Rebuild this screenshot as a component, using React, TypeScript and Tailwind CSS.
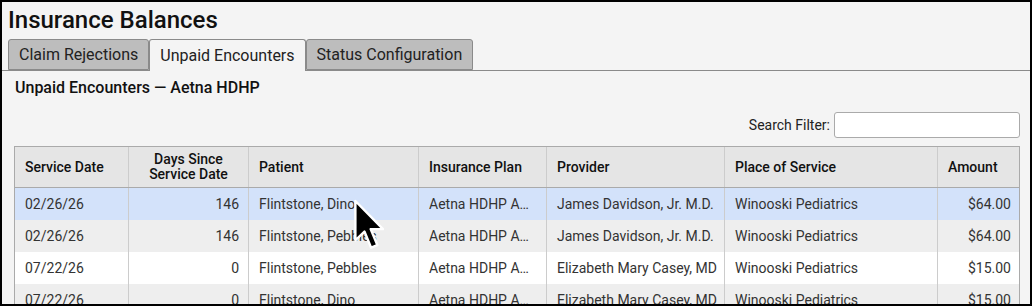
import React from 'react';

type Row = {
  date: string;
  days: number;
  patient: string;
  plan: string;
  provider: string;
  place: string;
  amount: string;
};

const rows: Row[] = [
  { date: '02/26/26', days: 146, patient: 'Flintstone, Dino', plan: 'Aetna HDHP Aetna HDHP', provider: 'James Davidson, Jr. M.D.', place: 'Winooski Pediatrics', amount: '$64.00' },
  { date: '02/26/26', days: 146, patient: 'Flintstone, Pebbles', plan: 'Aetna HDHP Aetna HDHP', provider: 'James Davidson, Jr. M.D.', place: 'Winooski Pediatrics', amount: '$64.00' },
  { date: '07/22/26', days: 0, patient: 'Flintstone, Pebbles', plan: 'Aetna HDHP Aetna HDHP', provider: 'Elizabeth Mary Casey, MD', place: 'Winooski Pediatrics', amount: '$15.00' },
  { date: '07/22/26', days: 0, patient: 'Flintstone, Dino', plan: 'Aetna HDHP Aetna HDHP', provider: 'Elizabeth Mary Casey, MD', place: 'Winooski Pediatrics', amount: '$15.00' },
];

const rowBg = ['bg-[#d3e2fa]', 'bg-[#eeeeee]', 'bg-white', 'bg-[#eeeeee]'];

const cols = 'grid grid-cols-[114px_120px_170px_128px_178px_213px_82px]';
const cell = 'flex items-center px-[10px] border-r border-[#cccccc] whitespace-nowrap overflow-hidden';

// Pointer drawn over the first rows
const Cursor = () => (
  <svg className="absolute left-[351px] top-[196px]" width="31" height="56" viewBox="0 0 13 23">
    <path d="M1 1 L1 17.5 L4.8 13.8 L7.6 20.6 L10.2 19.5 L7.4 12.8 L12.6 12.8 Z" fill="#000" stroke="#fff" strokeWidth="1" strokeLinejoin="round" />
  </svg>
);

const Tab = ({ label, active }: { label: string; active?: boolean }) => (
  <div
    className={
      active
        ? 'relative -mb-px h-[32px] px-[10px] flex items-center border border-b-0 border-[#8a8a8a] rounded-t-[3px] bg-[#f4f4f4]'
        : 'h-[31px] px-[10px] flex items-center border border-[#8a8a8a] rounded-t-[3px] bg-[#bdbdbd]'
    }
  >
    {label}
  </div>
);

export default function App() {
  return (
    <div className="relative w-[1032px] h-[306px] overflow-hidden border-2 border-black bg-[#f4f4f4] text-[#222] font-['Roboto',sans-serif]">
      <h1 className="pl-[6px] pt-[3px] h-[37px] text-[24px] leading-[30px] font-medium text-[#111]">Insurance Balances</h1>

      {/* tabs */}
      <div className="flex items-end gap-0 pl-[6px] border-b border-[#8a8a8a] text-[16px]">
        <Tab label="Claim Rejections" />
        <Tab label="Unpaid Encounters" active />
        <Tab label="Status Configuration" />
      </div>

      <div className="pl-[12px] pr-[10px]">
        <h2 className="pt-[8px] pl-px text-[16px] leading-[18px] font-medium text-[#111]">Unpaid Encounters — Aetna HDHP</h2>

        <div className="flex items-center justify-end gap-[4px] mt-[15px] text-[14px]">
          <span>Search Filter:</span>
          <input className="w-[186px] h-[26px] rounded-[3px] border border-[#aaaaaa] bg-white px-2 outline-none" />
        </div>

        <div className="mt-[8px] border border-[#aaaaaa] text-[14px]">
          <div className={`${cols} h-[41px] bg-[#e5e5e5] text-[#111] font-medium border-b border-[#aaaaaa]`}>
            <div className={cell}>Service Date</div>
            <div className={`${cell} justify-center text-center leading-[15px]`}>Days Since<br />Service Date</div>
            <div className={cell}>Patient</div>
            <div className={cell}>Insurance Plan</div>
            <div className={cell}>Provider</div>
            <div className={cell}>Place of Service</div>
            <div className="flex items-center px-[10px]">Amount</div>
          </div>
          {rows.map((r, i) => (
            <div key={i} className={`${cols} h-[32px] text-[#333] ${rowBg[i]}`}>
              <div className={cell}>{r.date}</div>
              <div className={`${cell} justify-end pr-[9px]`}>{r.days}</div>
              <div className={cell}>{r.patient}</div>
              <div className={cell}>
                <span className="block overflow-hidden text-ellipsis">{r.plan}</span>
              </div>
              <div className={cell}>{r.provider}</div>
              <div className={cell}>{r.place}</div>
              <div className="flex items-center justify-end px-[9px]">{r.amount}</div>
            </div>
          ))}
        </div>
      </div>

      <Cursor />
    </div>
  );
}
